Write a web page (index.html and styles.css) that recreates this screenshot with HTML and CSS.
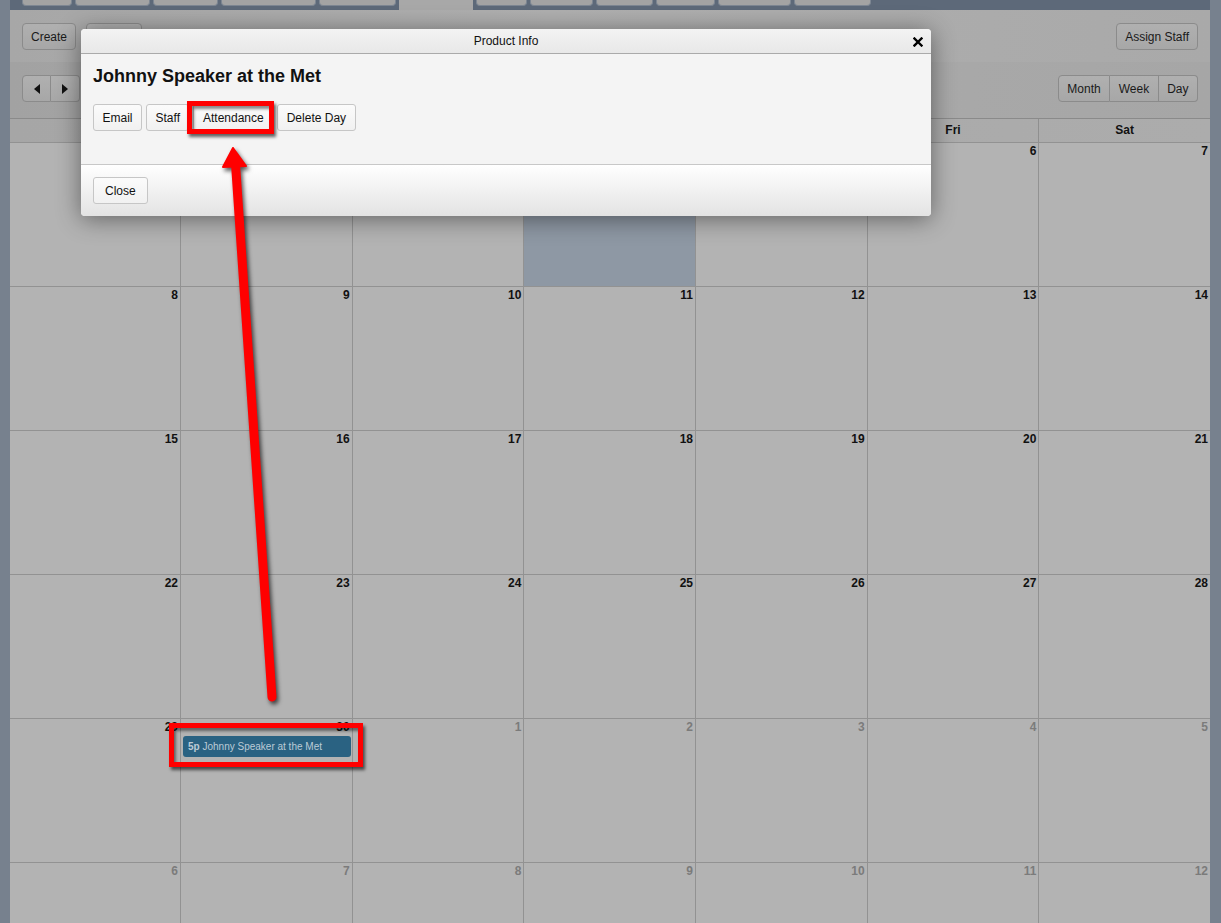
FILE: index.html
```html
<!DOCTYPE html>
<html>
<head>
  <meta charset="utf-8">
  <title>Event calendar</title>
  <link rel="stylesheet" href="styles.css">
</head>
<body>
  <div class="page">
    <div class="tabs">
      <span class="tab"></span><span class="tab"></span><span class="tab"></span><span class="tab"></span><span class="tab"></span>
      <span class="tab active"></span>
      <span class="tab"></span><span class="tab"></span><span class="tab"></span><span class="tab"></span><span class="tab"></span><span class="tab"></span>
    </div>

    <div class="toolbar">
      <div class="group">
        <button class="btn">Create</button>
        <button class="btn">Search</button>
      </div>
      <button class="btn">Assign Staff</button>
    </div>

    <div class="toolbar nav">
      <div class="btn-set">
        <button class="btn"><span class="tri left"></span></button><button class="btn"><span class="tri right"></span></button>
      </div>
      <div class="btn-set">
        <button class="btn">Month</button><button class="btn">Week</button><button class="btn">Day</button>
      </div>
    </div>

    <div class="calendar">
      <div class="cal-head">
        <div>Sun</div><div>Mon</div><div>Tue</div><div>Wed</div><div>Thu</div><div>Fri</div><div>Sat</div>
      </div>
      <div class="week">
        <div class="day"><div class="num">1</div></div>
        <div class="day"><div class="num">2</div></div>
        <div class="day"><div class="num">3</div></div>
        <div class="day today"><div class="num">4</div></div>
        <div class="day"><div class="num">5</div></div>
        <div class="day"><div class="num">6</div></div>
        <div class="day"><div class="num">7</div></div>
      </div>
      <div class="week">
        <div class="day"><div class="num">8</div></div>
        <div class="day"><div class="num">9</div></div>
        <div class="day"><div class="num">10</div></div>
        <div class="day"><div class="num">11</div></div>
        <div class="day"><div class="num">12</div></div>
        <div class="day"><div class="num">13</div></div>
        <div class="day"><div class="num">14</div></div>
      </div>
      <div class="week">
        <div class="day"><div class="num">15</div></div>
        <div class="day"><div class="num">16</div></div>
        <div class="day"><div class="num">17</div></div>
        <div class="day"><div class="num">18</div></div>
        <div class="day"><div class="num">19</div></div>
        <div class="day"><div class="num">20</div></div>
        <div class="day"><div class="num">21</div></div>
      </div>
      <div class="week">
        <div class="day"><div class="num">22</div></div>
        <div class="day"><div class="num">23</div></div>
        <div class="day"><div class="num">24</div></div>
        <div class="day"><div class="num">25</div></div>
        <div class="day"><div class="num">26</div></div>
        <div class="day"><div class="num">27</div></div>
        <div class="day"><div class="num">28</div></div>
      </div>
      <div class="week">
        <div class="day"><div class="num">29</div></div>
        <div class="day">
          <div class="num">30</div>
          <div class="event"><b>5p</b> Johnny Speaker at the Met</div>
        </div>
        <div class="day other"><div class="num">1</div></div>
        <div class="day other"><div class="num">2</div></div>
        <div class="day other"><div class="num">3</div></div>
        <div class="day other"><div class="num">4</div></div>
        <div class="day other"><div class="num">5</div></div>
      </div>
      <div class="week">
        <div class="day other"><div class="num">6</div></div>
        <div class="day other"><div class="num">7</div></div>
        <div class="day other"><div class="num">8</div></div>
        <div class="day other"><div class="num">9</div></div>
        <div class="day other"><div class="num">10</div></div>
        <div class="day other"><div class="num">11</div></div>
        <div class="day other"><div class="num">12</div></div>
      </div>
    </div>
  </div>

  <!-- modal -->
  <div class="dialog">
    <div class="dialog-head">
      Product Info
      <svg class="close-x" width="10" height="10" viewBox="0 0 10 10">
        <path d="M1.5 1.5 L8.5 8.5 M8.5 1.5 L1.5 8.5" stroke="#000" stroke-width="2.4" stroke-linecap="square"/>
      </svg>
    </div>
    <div class="dialog-body">
      <h2>Johnny Speaker at the Met</h2>
      <div class="actions">
        <button class="dbtn">Email</button>
        <button class="dbtn">Staff</button>
        <button class="dbtn">Attendance</button>
        <button class="dbtn">Delete Day</button>
      </div>
    </div>
    <div class="dialog-foot">
      <button class="dbtn">Close</button>
    </div>
  </div>

  <!-- callouts drawn on top -->
  <div class="mark mark-attend"></div>
  <div class="mark mark-event"></div>
  <svg class="arrow" width="1221" height="923" viewBox="0 0 1221 923">
    <g fill="#ff0000" stroke="#ff0000">
      <path d="M272 697 L235.5 164" stroke-width="9" stroke-linecap="round" fill="none"/>
      <path d="M233 148 L246 166 L223 167 Z" stroke-width="2" stroke-linejoin="round"/>
    </g>
  </svg>
</body>
</html>
```

FILE: styles.css
```css
html, body {
  margin: 0;
  height: 100%;
  overflow: hidden;
}

body {
  position: relative;
  background: #77818e;
  font-family: "Liberation Sans", Arial, sans-serif;
  font-size: 12px;
  color: #111;
}

.page {
  margin-left: 10px;
  width: 1200px;
  background: #b2b2b2;
}

/* tab strip */
.tabs {
  height: 10px;
  background: #5d6979;
  display: flex;
  gap: 3px;
  padding-left: 12px;
}

.tab {
  box-sizing: border-box;
  height: 6px;
  background: #a3a3a3;
  border: 1px solid #7d8692;
  border-top: 0;
  border-radius: 0 0 4px 4px;
}

.tab:nth-child(1) { width: 50px; }
.tab:nth-child(2) { width: 75px; }
.tab:nth-child(3) { width: 65px; }
.tab:nth-child(4) { width: 95px; }
.tab:nth-child(5) { width: 77px; }
.tab:nth-child(6) { width: 74px; }
.tab:nth-child(7) { width: 51px; }
.tab:nth-child(8) { width: 63px; }
.tab:nth-child(9) { width: 57px; }
.tab:nth-child(10) { width: 59px; }
.tab:nth-child(11) { width: 73px; }
.tab:nth-child(12) { width: 77px; }

.tab.active {
  height: 10px;
  background: #a8a8a8;
  border: 0;
  border-radius: 0;
}

/* toolbars */
.toolbar {
  display: flex;
  justify-content: space-between;
  align-items: flex-start;
  height: 52px;
  box-sizing: border-box;
  padding: 13px 12px 0;
  background: linear-gradient(90deg, #a7a7a7, #afafaf 45%, #a9a9a9);
}

.toolbar.nav {
  height: 56px;
  background: linear-gradient(90deg, #a2a2a2, #ababab 50%, #a6a6a6);
}

.group {
  display: flex;
  gap: 10px;
}

.btn {
  height: 27px;
  padding: 0 8px;
  border: 1px solid #8b8b8b;
  border-radius: 4px;
  background: linear-gradient(#b0b0b0, #a7a7a7);
  font-family: "Liberation Sans", Arial, sans-serif;
  font-size: 12px;
  color: #1a1a1a;
}

.btn-set {
  display: flex;
}

.btn-set .btn {
  padding: 0 8.5px;
  border-radius: 0;
  border-left-width: 0;
}

.btn-set .btn:first-child {
  border-left-width: 1px;
  border-radius: 4px 0 0 4px;
}

.btn-set .btn:last-child {
  border-radius: 0 4px 4px 0;
}

.btn-set:first-child .btn {
  width: 29px;
  padding: 0;
}

.tri {
  display: inline-block;
  width: 0;
  height: 0;
  border-top: 5px solid transparent;
  border-bottom: 5px solid transparent;
  vertical-align: middle;
}

.tri.left { border-right: 6px solid #111; }
.tri.right { border-left: 6px solid #111; }

/* month grid */
.calendar {
  background: #b3b3b3;
}

.cal-head,
.week {
  display: grid;
  grid-template-columns: 170px repeat(6, 1fr);
}

.cal-head {
  height: 24px;
  box-sizing: border-box;
  border-top: 1px solid #8a8a8a;
  background: linear-gradient(90deg, #a6a6a6, #acacac);
}

.cal-head div {
  text-align: center;
  font-weight: bold;
  line-height: 23px;
  border-left: 1px solid #8f8f8f;
}

.cal-head div:first-child,
.day:first-child {
  border-left: 0;
}

.week {
  height: 144px;
  box-sizing: border-box;
  border-top: 1px solid #929292;
}

.day {
  border-left: 1px solid #929292;
}

.day.today {
  background: #8e98a4;
}

.num {
  text-align: right;
  font-weight: bold;
  line-height: 14px;
  padding: 1px 2px 0 0;
  color: #111;
}

.day.other .num {
  color: #7b7b7b;
}

.event {
  margin: 2px 1px 0 2px;
  height: 21px;
  line-height: 21px;
  padding-left: 5px;
  border-radius: 3px;
  background: #2a6282;
  color: #bccbd6;
  font-size: 10px;
}

/* product dialog */
.dialog {
  position: absolute;
  left: 81px;
  top: 29px;
  width: 850px;
  height: 187px;
  background: #f4f4f4;
  border-radius: 4px;
  box-shadow: 0 3px 24px rgba(0, 0, 0, 0.45);
  overflow: hidden;
}

.dialog-head {
  position: relative;
  height: 24px;
  line-height: 24px;
  text-align: center;
  border-bottom: 1px solid #aaa;
  background: linear-gradient(#f3f3f3, #e8e8e8);
}

.close-x {
  position: absolute;
  right: 8px;
  top: 8px;
}

.dialog-body {
  height: 111px;
  box-sizing: border-box;
  padding: 11px 12px 0;
  border-bottom: 1px solid #c8c8c8;
}

.dialog-body h2 {
  margin: 0 0 17px;
  font-size: 18px;
  line-height: 22px;
}

.actions {
  display: flex;
  gap: 4px;
}

.dbtn {
  height: 27px;
  padding: 0 8.5px;
  border: 1px solid #c6c6c6;
  border-radius: 3px;
  background: linear-gradient(#fbfbfb, #f1f1f1);
  font-family: "Liberation Sans", Arial, sans-serif;
  font-size: 12px;
  color: #111;
}

.dialog-foot {
  height: 51px;
  box-sizing: border-box;
  padding: 12px 12px 0;
  background: linear-gradient(#ffffff, #e3e3e3);
}

.dialog-foot .dbtn {
  padding: 0 11px;
}

/* red callouts */
.mark {
  position: absolute;
  box-sizing: border-box;
  border: 5px solid #ff0000;
  box-shadow: 2px 3px 3px rgba(0, 0, 0, 0.6), inset 2px 3px 3px rgba(0, 0, 0, 0.45);
}

.mark-attend {
  left: 187px;
  top: 101px;
  width: 87px;
  height: 33px;
}

.mark-event {
  left: 169px;
  top: 723px;
  width: 194px;
  height: 44px;
}

.arrow {
  position: absolute;
  left: 0;
  top: 0;
  filter: drop-shadow(2px 3px 2px rgba(0, 0, 0, 0.65));
}
```
